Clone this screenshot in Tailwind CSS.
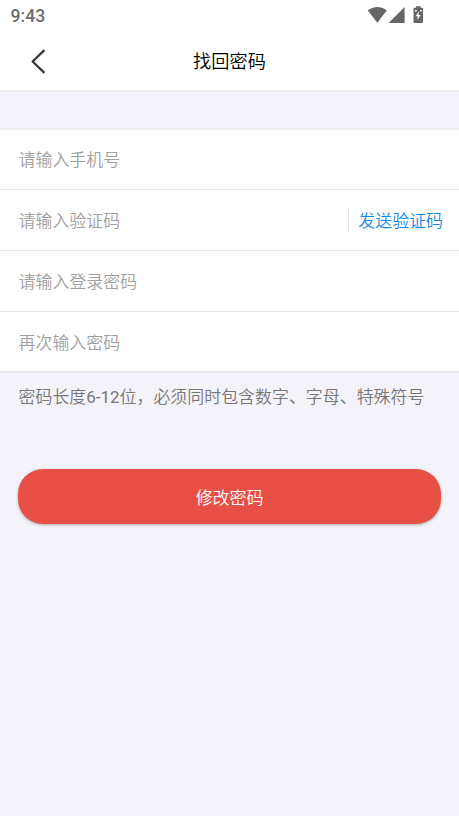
<!DOCTYPE html>
<html lang="zh-CN">
<head>
<meta charset="utf-8">
<meta name="viewport" content="width=device-width, initial-scale=1">
<title>找回密码</title>
<script src="https://cdn.jsdelivr.net/npm/@tailwindcss/browser@4"></script>
</head>
<body class="min-h-screen overflow-hidden bg-[#f4f3f9] font-[Roboto,'Noto_Sans_CJK_SC',sans-serif] text-[16.95px] font-[350] leading-6">
  <div class="flex h-8 items-center justify-between bg-white pl-[10.5px] pr-[35px] text-[#6c6c6c]">
    <span class="text-[17.6px] font-medium leading-8">9:43</span>
    <svg class="h-8 w-[57px]" viewBox="367 0 57 32" fill="#666" aria-hidden="true">
      <path d="M367.800 10.600C373 5.900 381.600 5.900 386.800 10.600L377.300 22.800Z"/>
      <path d="M404.600 7V23H388.600Z"/>
      <path fill-rule="evenodd" d="M416 6.300h4.500v1.500h1.500q1 0 1 1v13.200q0 1-1 1h-7.500q-1 0-1-1v-13.200q0-1 1-1h1.500ZM418.900 11.300l-3.300 5h2.200l-.6 4 3.500-5.200h-2.200Z"/>
      <path fill="#fff" d="M415 10h1.700v1.500H415zM420 10h1.700v1.500H420z"/>
    </svg>
  </div>
  <header class="grid h-[60px] grid-cols-3 items-center border-b-2 border-[#ececef] bg-white">
    <button class="ml-[30px] w-4 pb-px" aria-label="返回">
      <svg class="block h-[26px] w-4" viewBox="0 0 16 26" fill="none" stroke="#38383a" stroke-width="2.300" stroke-linecap="square" stroke-linejoin="round"><path d="M13.600 3 2.600 13.500l11 10.500"/></svg>
    </button>
    <h1 class="pt-0.5 text-center text-[18.2px] text-black">找回密码</h1>
  </header>
  <form class="mt-9 border-y-2 border-[#ececee] bg-white text-[#a0a0a0]">
    <div class="flex h-[60px] items-center border-b border-[#e6e6e6] pl-[18.5px]">请输入手机号</div>
    <div class="flex h-[61px] items-center justify-between border-b border-[#e6e6e6] pl-[18.5px] pr-4">
      <span class="pt-0.5">请输入验证码</span>
      <button type="button" class="h-6 border-l border-[#e4e4e4] pl-[9.500px] pt-px text-[#168be5]">发送验证码</button>
    </div>
    <div class="flex h-[61px] items-center border-b border-[#e6e6e6] pl-[18.5px] pt-0.5">请输入登录密码</div>
    <div class="flex h-[59px] items-center pl-[18.5px] pt-[3px]">再次输入密码</div>
  </form>
  <p class="mt-3 whitespace-nowrap pl-[18.5px] text-[#777]">密码长度<span class="font-normal">6-12</span>位，必须同时包含数字、字母、特殊符号</p>
  <button class="mx-[18px] mt-[60px] block h-[55px] w-[423px] rounded-[25px] bg-[#e95045] pt-0.5 text-white shadow-[0_1px_3px_rgba(0,0,0,0.3)]">修改密码</button>
</body>
</html>
